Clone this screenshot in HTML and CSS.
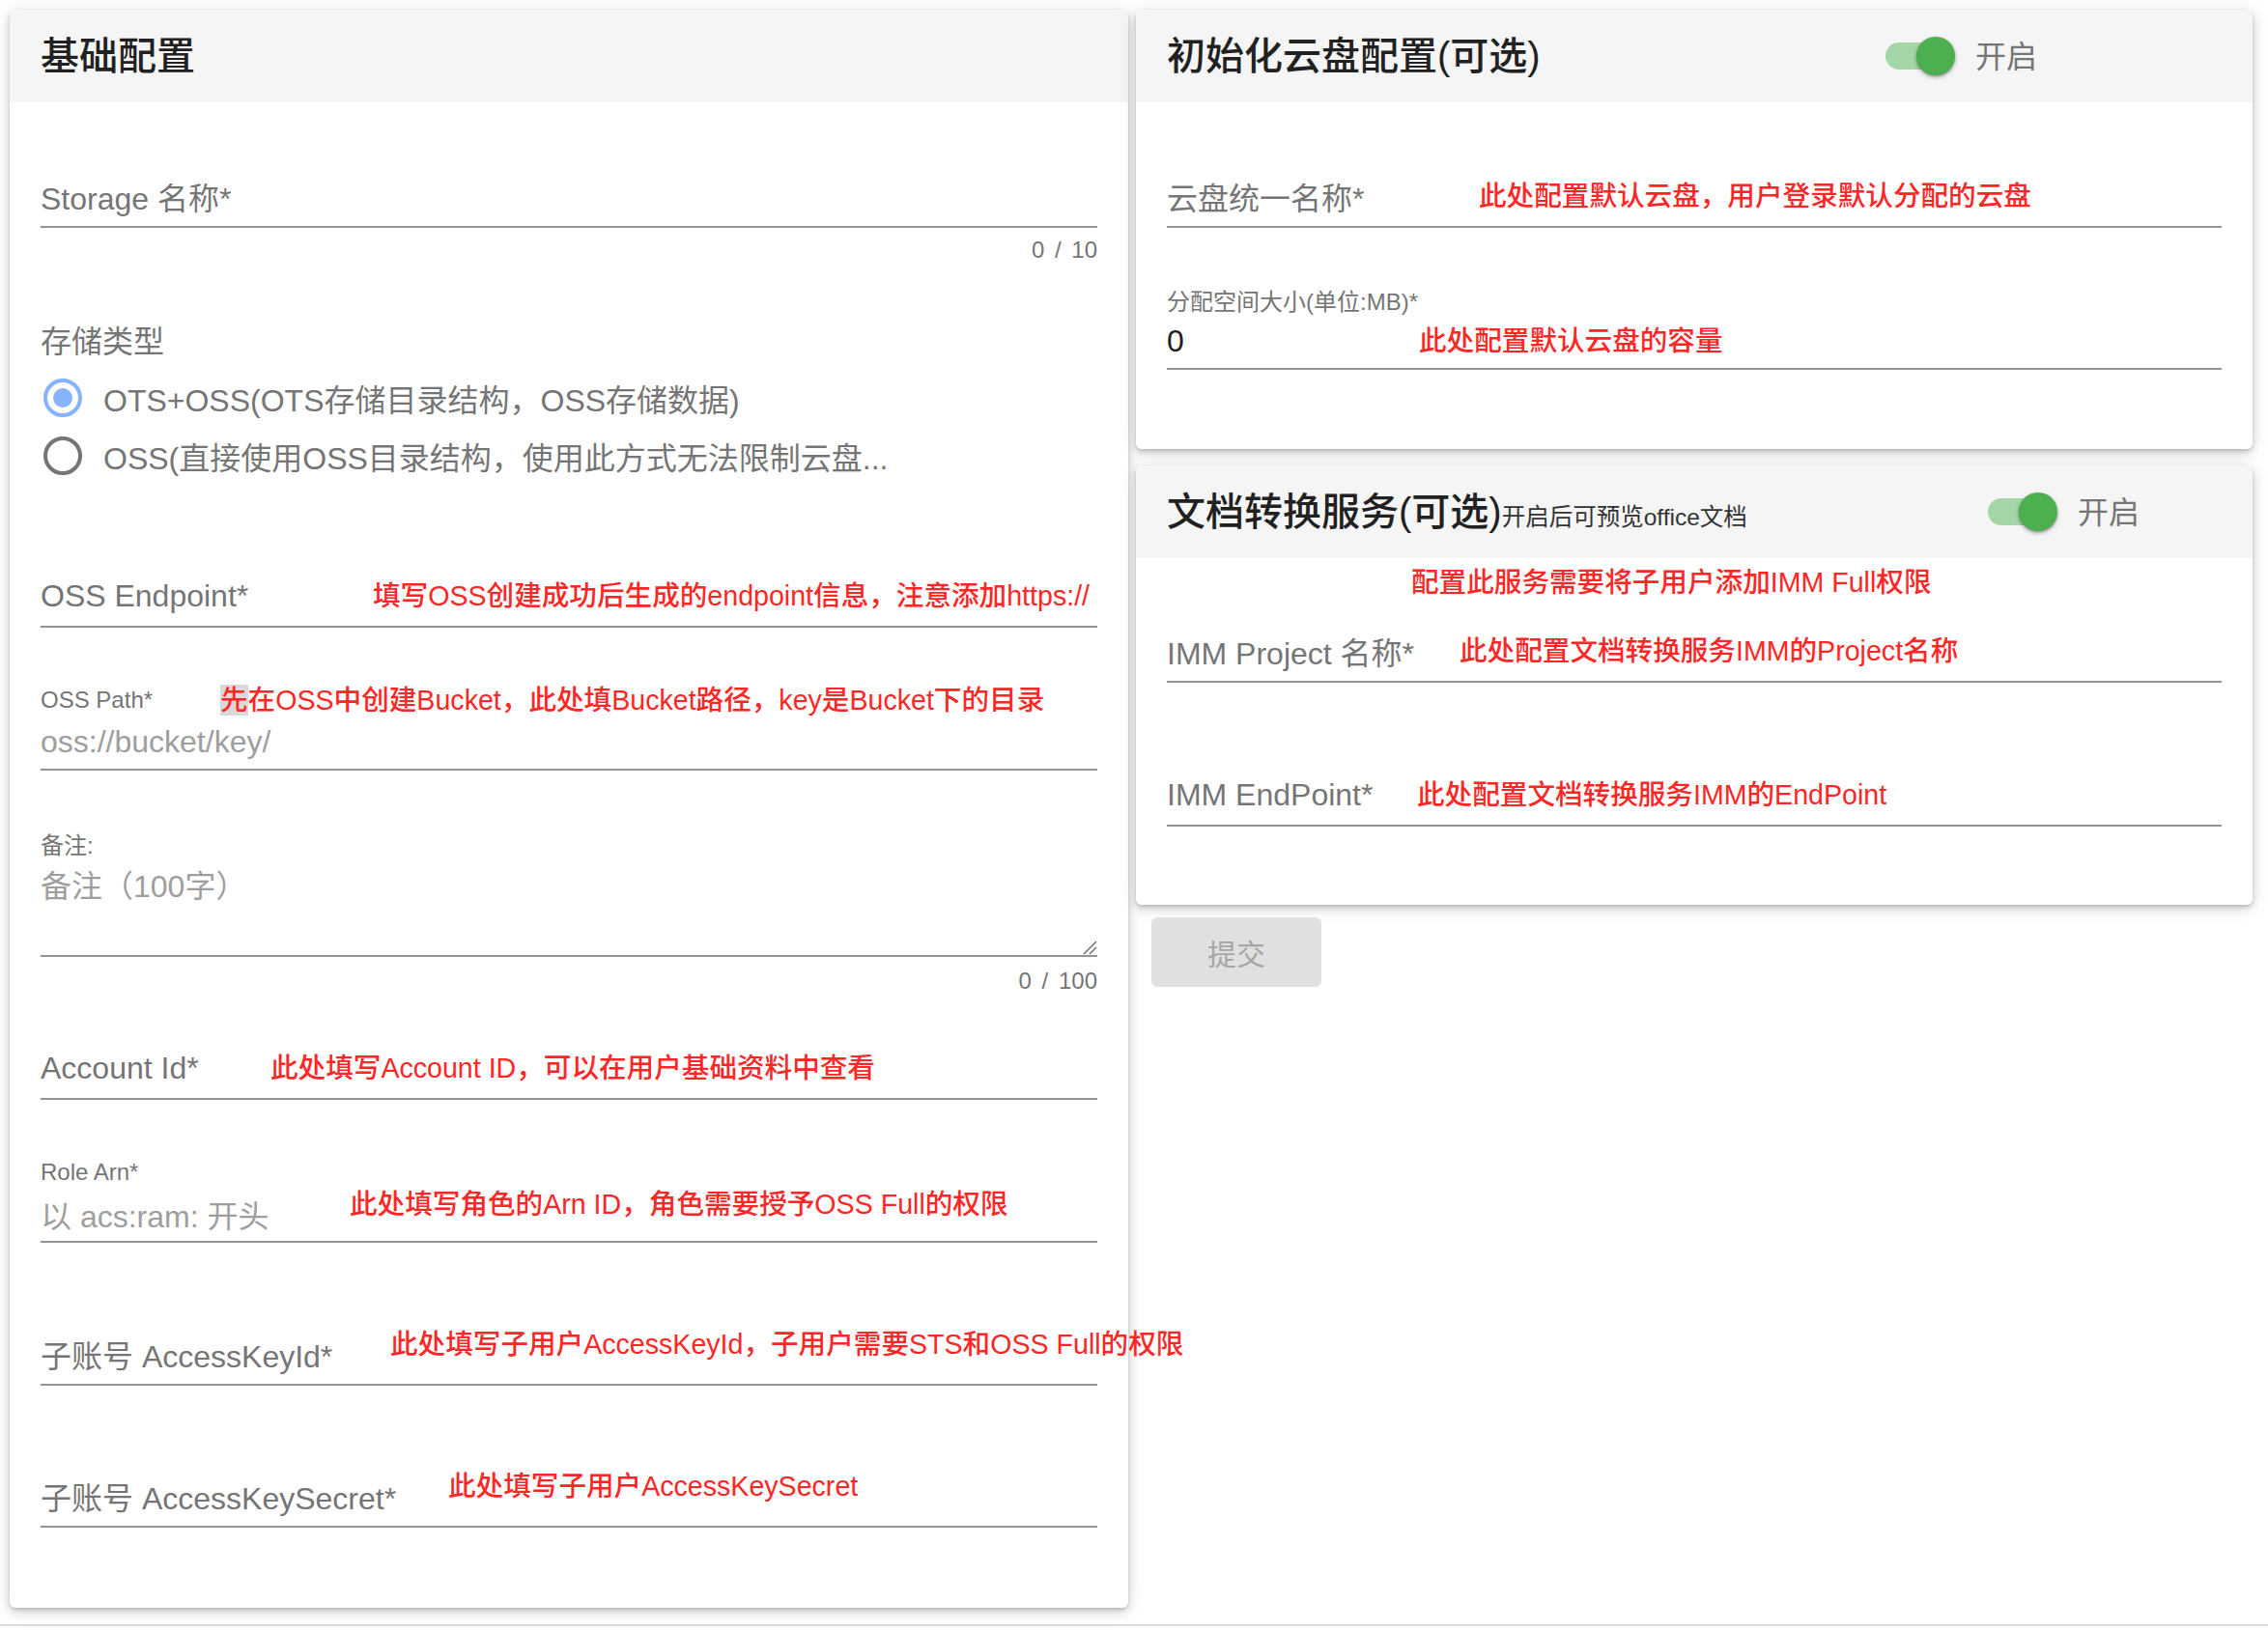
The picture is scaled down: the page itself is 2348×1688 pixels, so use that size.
FILE: index.html
```html
<!DOCTYPE html>
<html lang="zh-CN">
<head>
    <meta charset="UTF-8">
    <meta name="viewport" content="width=device-width, initial-scale=1.0">
    <title>存储配置</title>
    <link rel="stylesheet" href="styles.css">
</head>
<body>
    <div class="page">
        <!-- 基础配置 -->
        <section class="card card-basic">
            <div class="card-head">
                <h2 class="card-title">基础配置</h2>
            </div>
            <div class="card-body">
                <div class="line f-storage"><span class="label">Storage 名称*</span></div>
                <div class="counter">0 / 10</div>

                <div class="legend">存储类型</div>
                <div class="radios">
                    <div class="radio-row"><span class="radio checked"></span>OTS+OSS(OTS存储目录结构，OSS存储数据)</div>
                    <div class="radio-row"><span class="radio"></span>OSS(直接使用OSS目录结构，使用此方式无法限制云盘...</div>
                </div>

                <div class="line f-endpoint">
                    <span class="label lw-endpoint">OSS Endpoint*</span>
                    <span class="note">填写OSS创建成功后生成的endpoint信息，注意添加https://</span>
                </div>

                <div class="float-label f-path">
                    <span class="label lw-path">OSS Path*</span>
                    <span class="note"><mark class="sel">先</mark>在OSS中创建Bucket，此处填Bucket路径，key是Bucket下的目录</span>
                </div>
                <div class="line shrunk"><span class="placeholder">oss://bucket/key/</span></div>

                <div class="float-label f-remark"><span class="label">备注:</span></div>
                <div class="line area">
                    <span class="placeholder">备注（100字）</span>
                    <svg class="grip" width="16" height="16" viewBox="0 0 16 16">
                        <path d="M2 15L15 2M8 15L15 8" stroke="#6f6f6f" stroke-width="1.5" fill="none"/>
                    </svg>
                </div>
                <div class="counter counter-area">0 / 100</div>

                <div class="line f-account">
                    <span class="label lw-account">Account Id*</span>
                    <span class="note">此处填写Account ID，可以在用户基础资料中查看</span>
                </div>

                <div class="float-label f-role"><span class="label">Role Arn*</span></div>
                <div class="line shrunk">
                    <span class="placeholder lw-role">以 acs:ram: 开头</span>
                    <span class="note lift">此处填写角色的Arn ID，角色需要授予OSS Full的权限</span>
                </div>

                <div class="line f-keyid">
                    <span class="label lw-keyid">子账号 AccessKeyId*</span>
                    <span class="note lift">此处填写子用户AccessKeyId，子用户需要STS和OSS Full的权限</span>
                </div>

                <div class="line f-secret">
                    <span class="label lw-secret">子账号 AccessKeySecret*</span>
                    <span class="note lift">此处填写子用户AccessKeySecret</span>
                </div>
            </div>
        </section>

        <div class="side">
            <!-- 初始化云盘配置 -->
            <section class="card card-drive">
                <div class="card-head">
                    <div class="head-main">
                        <h2 class="card-title">初始化云盘配置(可选)</h2>
                    </div>
                    <div class="switch">
                        <span class="switch-track"></span>
                        <span class="switch-thumb"></span>
                    </div>
                    <span class="switch-label">开启</span>
                </div>
                <div class="card-body">
                    <div class="line f-drive-name">
                        <span class="label lw-drive">云盘统一名称*</span>
                        <span class="note">此处配置默认云盘，用户登录默认分配的云盘</span>
                    </div>
                    <div class="float-label f-quota"><span class="label">分配空间大小(单位:MB)*</span></div>
                    <div class="line shrunk">
                        <span class="value lw-quota">0</span>
                        <span class="note">此处配置默认云盘的容量</span>
                    </div>
                </div>
            </section>

            <!-- 文档转换服务 -->
            <section class="card card-imm">
                <div class="card-head">
                    <div class="head-main head-main-wide">
                        <h2 class="card-title">文档转换服务(可选)</h2>
                        <span class="card-sub">开启后可预览office文档</span>
                    </div>
                    <div class="switch">
                        <span class="switch-track"></span>
                        <span class="switch-thumb"></span>
                    </div>
                    <span class="switch-label">开启</span>
                </div>
                <div class="card-body">
                    <div class="tip"><span class="note">配置此服务需要将子用户添加IMM Full权限</span></div>
                    <div class="line f-project">
                        <span class="label lw-project">IMM Project 名称*</span>
                        <span class="note">此处配置文档转换服务IMM的Project名称</span>
                    </div>
                    <div class="line f-imm-endpoint">
                        <span class="label lw-imm-endpoint">IMM EndPoint*</span>
                        <span class="note">此处配置文档转换服务IMM的EndPoint</span>
                    </div>
                </div>
            </section>

            <button class="btn-submit" disabled>提交</button>
        </div>
    </div>
    <div class="page-end"></div>
</body>
</html>
```

FILE: styles.css
```css
body {
    margin: 0;
    background: #fff;
    font-family: 'Liberation Sans', 'Noto Sans CJK SC', sans-serif;
    color: #212121;
}

.page {
    display: grid;
    grid-template-columns: 1158px 1156px;
    column-gap: 8px;
    padding: 10px;
    align-items: start;
}

.side {
    display: flex;
    flex-direction: column;
    gap: 17px;
}

.card {
    background: #fff;
    border-radius: 6px;
    box-shadow: 0 2px 4px -1px rgba(0,0,0,0.2), 0 4px 10px rgba(0,0,0,0.14), 0 2px 20px rgba(0,0,0,0.1);
}

.card-head {
    height: 96px;
    background: #f5f5f5;
    border-radius: 6px 6px 0 0;
    display: flex;
    align-items: center;
    padding: 0 32px;
}

.card-title {
    margin: 0;
    font-size: 40px;
    line-height: 48px;
    font-weight: 500;
    color: #212121;
    white-space: nowrap;
}

.card-sub {
    font-size: 24.5px;
    color: #333;
    white-space: nowrap;
}

.head-main {
    flex: 0 0 744px;
    display: flex;
    align-items: baseline;
}

.head-main-wide {
    flex-basis: 850px;
}

/* switch */
.switch {
    width: 72px;
    height: 40px;
    display: flex;
    align-items: center;
    position: relative;
}

.switch-track {
    width: 68px;
    height: 28px;
    border-radius: 14px;
    background: #a5d6a7;
}

.switch-thumb {
    position: absolute;
    top: 0;
    right: 0;
    width: 40px;
    height: 40px;
    border-radius: 50%;
    background: #4caf50;
    box-shadow: 0 2px 4px rgba(0,0,0,0.3), 0 1px 2px rgba(0,0,0,0.2);
}

.switch-label {
    margin: 0 0 4px 21px;
    font-size: 32px;
    color: #757575;
}

/* body */
.card-body {
    padding: 0 32px 83px;
}

.card-drive .card-body {
    padding-bottom: 82px;
}

.card-imm .card-body {
    padding-bottom: 81px;
}

.line {
    height: 62px;
    border-bottom: 2px solid #949494;
    display: flex;
    align-items: center;
    font-size: 32px;
    color: #757575;
    white-space: nowrap;
}

.line.shrunk {
    height: 56px;
}

.line.area {
    height: 89px;
    padding-top: 12px;
    align-items: flex-start;
    line-height: 36px;
}

.label, .placeholder, .value {
    flex: none;
}

.placeholder {
    color: #9e9e9e;
}

.value {
    color: #212121;
}

.float-label {
    height: 30px;
    display: flex;
    align-items: center;
    font-size: 24px;
    color: #757575;
    white-space: nowrap;
}

.note {
    font-size: 28.6px;
    line-height: 30px;
    font-weight: 500;
    color: #ff2626;
    white-space: nowrap;
}

.note.lift {
    margin-bottom: 20px;
}

.sel {
    background: #d9d9d9;
    color: inherit;
}

.grip {
    margin-left: auto;
    align-self: flex-end;
}

.counter {
    margin-top: 8px;
    text-align: right;
    font-size: 24px;
    line-height: 30px;
    word-spacing: 4px;
    color: #757575;
}

.counter-area {
    margin-top: 10px;
}

.legend {
    margin-top: 60px;
    font-size: 32px;
    line-height: 40px;
    color: #757575;
}

.radios {
    margin-top: 8px;
}

.radio-row {
    height: 60px;
    display: flex;
    align-items: center;
    font-size: 32px;
    color: #757575;
    white-space: nowrap;
}

.radio {
    flex: none;
    width: 32px;
    height: 32px;
    border: 4px solid #757575;
    border-radius: 50%;
    margin: 0 22px 0 3px;
    display: flex;
    align-items: center;
    justify-content: center;
}

.radio.checked {
    border-color: #86b3fb;
}

.radio.checked::after {
    content: '';
    width: 20px;
    height: 20px;
    border-radius: 50%;
    background: #86b3fb;
}

/* vertical rhythm, left card */
.f-storage { margin-top: 66px; }
.f-endpoint { margin-top: 84px; }
.f-path { margin-top: 60px; }
.f-remark { margin-top: 60px; }
.f-account { margin-top: 44px; }
.f-role { margin-top: 60px; }
.f-keyid { margin-top: 84px; }
.f-secret { margin-top: 83px; }

/* right cards */
.f-drive-name { margin-top: 66px; }
.f-quota { margin-top: 59px; }
.tip {
    margin-top: 10px;
    height: 30px;
    padding-left: 253px;
}
.f-project { margin-top: 25px; }
.f-imm-endpoint { margin-top: 85px; }

.lw-endpoint { width: 344px; }
.lw-path { width: 186px; }
.lw-account { width: 238px; }
.lw-role { width: 320px; }
.lw-keyid { width: 362px; }
.lw-secret { width: 422px; }
.lw-drive { width: 323px; }
.lw-quota { width: 261px; }
.lw-project { width: 303px; }
.lw-imm-endpoint { width: 259px; }

.btn-submit {
    align-self: flex-start;
    margin: -4px 0 0 16px;
    width: 176px;
    height: 72px;
    border: none;
    border-radius: 6px;
    background: #e0e0e0;
    color: #a6a6a6;
    font-family: 'Liberation Sans', 'Noto Sans CJK SC', sans-serif;
    font-size: 30px;
}

.page-end {
    margin-top: 7px;
    border-top: 2px solid #dcdcdc;
}
```
